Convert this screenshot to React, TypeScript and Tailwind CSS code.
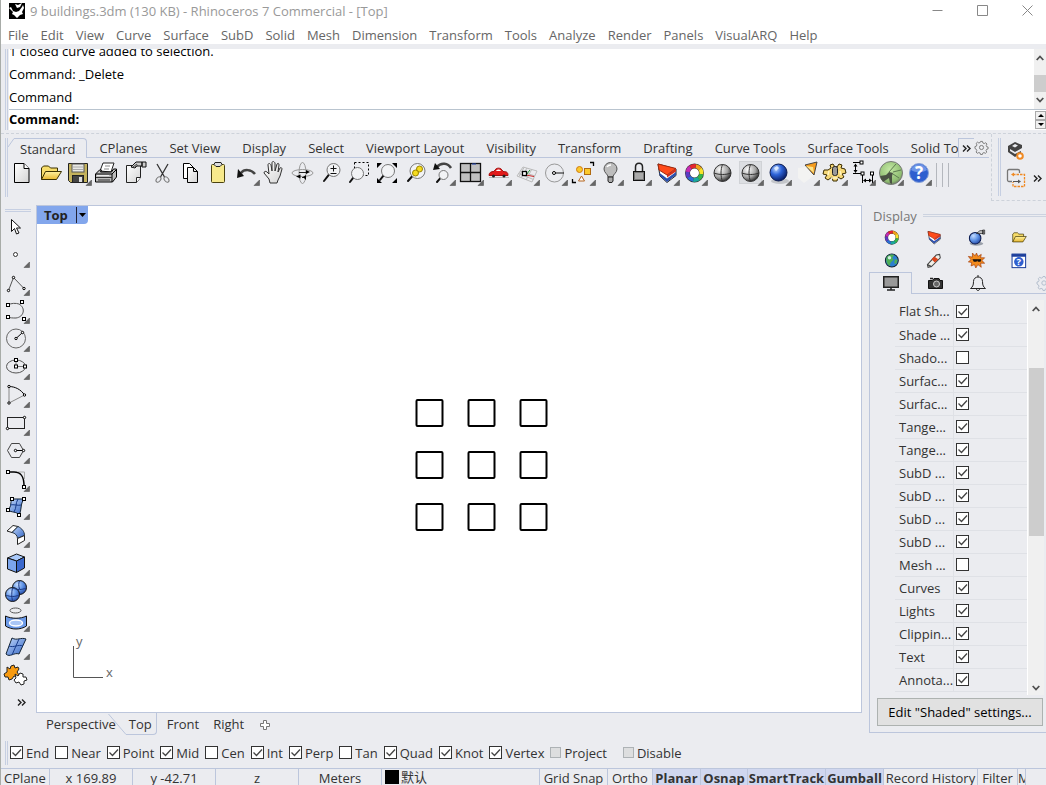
import { useState } from 'react'
import type { ReactNode } from 'react'
import clsx from 'clsx'

const MENUS = [
  'File', 'Edit', 'View', 'Curve', 'Surface', 'SubD', 'Solid', 'Mesh', 'Dimension', 'Transform',
  'Tools', 'Analyze', 'Render', 'Panels', 'VisualARQ', 'Help',
]

const TOOLBAR_TABS = [
  'CPlanes', 'Set View', 'Display', 'Select', 'Viewport Layout', 'Visibility', 'Transform',
  'Drafting', 'Curve Tools', 'Surface Tools', 'Solid Tools',
]

const DISPLAY_ROWS: [string, boolean][] = [
  ['Flat Sh...', true],
  ['Shade ...', true],
  ['Shado...', false],
  ['Surfac...', true],
  ['Surfac...', true],
  ['Tange...', true],
  ['Tange...', true],
  ['SubD ...', true],
  ['SubD ...', true],
  ['SubD ...', true],
  ['SubD ...', true],
  ['Mesh ...', false],
  ['Curves', true],
  ['Lights', true],
  ['Clippin...', true],
  ['Text', true],
  ['Annota...', true],
]

const OSNAPS: [string, boolean][] = [
  ['End', true],
  ['Near', false],
  ['Point', true],
  ['Mid', true],
  ['Cen', false],
  ['Int', true],
  ['Perp', true],
  ['Tan', false],
  ['Quad', true],
  ['Knot', true],
  ['Vertex', true],
]

/* ---------- icon helpers ---------- */

function Nodes({ at, r = 1.5 }: { at: [number, number][]; r?: number }) {
  return (
    <>
      {at.map(([x, y]) => (
        <circle key={`${x}-${y}`} cx={x} cy={y} r={r} fill="#fff" stroke="#000" />
      ))}
    </>
  )
}

function Handles({ at }: { at: [number, number][] }) {
  return (
    <>
      {at.map(([x, y]) => (
        <rect key={`${x}-${y}`} x={x - 1.5} y={y - 1.5} width="3" height="3" fill="#fff" stroke="#000" />
      ))}
    </>
  )
}

function Lens({ x, y, r, hx, hy }: { x: number; y: number; r: number; hx: number; hy: number }) {
  return (
    <>
      <path d={`M${x - r * 0.7} ${y + r * 0.7}L${hx} ${hy}`} stroke="#111" strokeWidth="2" strokeLinecap="round" />
      <circle cx={x} cy={y} r={r} fill="#f2f3f5" stroke="#777" />
    </>
  )
}

function Wheel({ r }: { r: number }) {
  const colors = ['#f2a01c', '#f8e22a', '#35b54a', '#1aa89b', '#2a6fd6', '#5b3bc4', '#c52bb4', '#e3262f']
  const c = 2 * Math.PI * r
  return (
    <>
      <circle cx="14.5" cy="14" r={r} fill="#fff" stroke="#333" strokeWidth="5" />
      {colors.map((color, i) => (
        <circle
          key={color}
          cx="14.5"
          cy="14"
          r={r}
          fill="none"
          stroke={color}
          strokeWidth="4"
          strokeDasharray={`${c / 8} ${c}`}
          transform={`rotate(${i * 45 - 80} 14.5 14)`}
        />
      ))}
    </>
  )
}

function Gradients() {
  return (
    <svg className="absolute size-0" aria-hidden="true">
      <defs>
        <linearGradient id="paper" x1="0" y1="0" x2="1" y2="1">
          <stop offset="0" stopColor="#fff" />
          <stop offset="1" stopColor="#d4d4d4" />
        </linearGradient>
        <linearGradient id="gold" x1="0" y1="0" x2="0" y2="1">
          <stop offset="0" stopColor="#fff2a0" />
          <stop offset="1" stopColor="#e8b830" />
        </linearGradient>
        <linearGradient id="sheet" x1="0" y1="0" x2="1" y2="1">
          <stop offset="0" stopColor="#c3d9fb" />
          <stop offset="1" stopColor="#2f62c4" />
        </linearGradient>
        <radialGradient id="gray" cx=".35" cy=".3" r=".75">
          <stop offset="0" stopColor="#fff" />
          <stop offset=".6" stopColor="#a4a4a4" />
          <stop offset="1" stopColor="#222" />
        </radialGradient>
        <radialGradient id="blue" cx=".35" cy=".3" r=".75">
          <stop offset="0" stopColor="#b8d4ff" />
          <stop offset=".45" stopColor="#2d63d8" />
          <stop offset="1" stopColor="#06185c" />
        </radialGradient>
        <radialGradient id="ball" cx=".35" cy=".3" r=".8">
          <stop offset="0" stopColor="#c4dcff" />
          <stop offset=".5" stopColor="#5f93e6" />
          <stop offset="1" stopColor="#1c3f9c" />
        </radialGradient>
        <radialGradient id="green" cx=".45" cy=".35" r=".75">
          <stop offset="0" stopColor="#c4e8a4" />
          <stop offset=".7" stopColor="#8fbd72" />
          <stop offset="1" stopColor="#555" />
        </radialGradient>
      </defs>
    </svg>
  )
}

const layerWedge = (
  <>
    <path d="M6 5l2 12 7 6.500 9-7V10z" fill="#fff" stroke="#222" />
    <path d="M8 17l7 6 9-7v-3l-9 6.500-8-6z" fill="#2a4fae" />
    <path d="M6 5l18 4.500-9 6.500-8-5z" fill="#ff4a1a" stroke="#a02a10" />
    <path d="M15 16v2.500l9-6V9.500z" fill="#d32f1c" />
  </>
)

const folder = (
  <>
    <path d="M5.500 20.500V9l2-2h5l2 2h7v4" fill="#f7dd6a" stroke="#3a3000" />
    <path d="M5.500 20.500l4-8h16l-5 8z" fill="url(#gold)" stroke="#3a3000" />
  </>
)

/* ---------- toolbars ---------- */

type Tool = { name: string; more?: boolean; art: ReactNode }

const MAIN_TOOLS: Tool[] = [
  {
    name: 'New',
    art: (
      <>
        <path d="M6.500 4.500h9.500l5 5v14h-14.500z" fill="url(#paper)" stroke="#000" />
        <path d="M16 4.500v5h5" fill="#fff" stroke="#000" />
      </>
    ),
  },
  { name: 'Open', art: folder },
  {
    name: 'Save',
    more: true,
    art: (
      <>
        <path d="M4.500 4.500h19v19h-17l-2-2z" fill="#c4b25c" stroke="#222" />
        <rect x="8" y="5" width="12" height="8" fill="#e9e9e4" stroke="#555" />
        <path d="M9 8h10M9 10.500h10" stroke="#aaa" />
        <rect x="8.500" y="16.500" width="11" height="7" fill="#444" stroke="#222" />
        <rect x="15" y="18" width="3" height="5" fill="#ddd" />
      </>
    ),
  },
  {
    name: 'Print',
    art: (
      <>
        <path d="M8 12l3-8h11l-3 9z" fill="#fff" stroke="#222" />
        <path d="M13 7h5M12 10h5" stroke="#888" />
        <path d="M3.500 15l4-4h2l-1 2h11l2-3h3v8l-4 5h-17z" fill="#bbb" stroke="#000" />
        <path d="M4 15h16l4-4M20 15v8" stroke="#000" />
        <path d="M4 18.500h16M6 21h12" stroke="#333" />
        <path d="M5 16.500h12" stroke="#eee" />
      </>
    ),
  },
  {
    name: 'Properties',
    art: (
      <>
        <path d="M6.500 6.500h14v12l-4 5h-10z" fill="url(#paper)" stroke="#222" />
        <path d="M20.500 18.500h-4v5" fill="#fff" stroke="#222" />
        <path d="M11 8l5-5h6v4h-5l-2 2zM22 3h4v5h-4z" fill="#ccc" stroke="#111" />
        <path d="M13 8l4-3M15 8l3-2" stroke="#444" />
      </>
    ),
  },
  {
    name: 'Cut',
    art: (
      <>
        <path d="M9 5l7.500 13M20 5l-7.500 13" stroke="#333" strokeWidth="1.300" />
        <ellipse cx="10.500" cy="20.500" rx="2" ry="3" transform="rotate(40 10.500 20.500)" stroke="#777" />
        <ellipse cx="18.500" cy="20.500" rx="2" ry="3" transform="rotate(-40 18.500 20.500)" stroke="#777" />
      </>
    ),
  },
  {
    name: 'Copy',
    art: (
      <>
        <path d="M7.500 4.500h6l4 4v11h-10z" fill="#fff" stroke="#000" />
        <path d="M11.500 8.500h6l4 4v11h-10z" fill="url(#paper)" stroke="#000" />
        <path d="M17.500 8.500v4h4" stroke="#000" />
      </>
    ),
  },
  {
    name: 'Paste',
    art: (
      <>
        <rect x="7.500" y="5.500" width="13" height="18" rx="1" fill="#f7e98c" stroke="#4a4210" />
        <path d="M10 5.500l1-2h6l1 2-2 2h-4z" fill="#ddd" stroke="#222" />
      </>
    ),
  },
  {
    name: 'Undo',
    more: true,
    art: (
      <>
        <path d="M9 14c3-4 10-4 14 1" stroke="#444" strokeWidth="2.500" />
        <path d="M5 19l1-9 6 7z" fill="#111" />
      </>
    ),
  },
  {
    name: 'Pan',
    art: (
      <path
        d="M10 24l-1-4-5-6c0-2 2-2 3-1l2 2-1-9c0-2 2-2 3 0l1 6V4c0-2 2-2 3 0v8l2-7c1-1 2-1 2 1l-1 7 2-4c1-1 2 0 2 1l-2 7-2 4-1 3z"
        fill="url(#paper)"
        stroke="#333"
        strokeLinejoin="round"
      />
    ),
  },
  {
    name: 'Rotate view',
    art: (
      <>
        <ellipse cx="14.500" cy="14" rx="10.500" ry="3.500" stroke="#999" />
        <ellipse cx="14.500" cy="14" rx="3.500" ry="10.500" stroke="#999" />
        <path d="M11 13.500h8M14 18.500h3.500" stroke="#222" />
        <path d="M8 17.500l4.500-2v4zM22 13l-4-2v4zM18 16l-3 2 3 3z" fill="#000" />
      </>
    ),
  },
  {
    name: 'Zoom dynamic',
    art: (
      <>
        <Lens x={17.5} y={11} r={6.5} hx={8} hy={22} />
        <path d="M14.500 9.500h6M17.500 6.500v6M14.500 14.500h6" stroke="#111" />
      </>
    ),
  },
  {
    name: 'Zoom window',
    art: (
      <>
        <rect x="10.500" y="3.500" width="14" height="13" stroke="#000" strokeDasharray="2 2" />
        <Lens x={13.5} y={14.5} r={6} hx={6} hy={23} />
      </>
    ),
  },
  {
    name: 'Zoom extents',
    art: (
      <>
        <path d="M5 4h5l-5 5zM25 4h-5l5 5zM5 24h5l-5-5zM25 24h-5l5-5z" fill="#000" />
        <Lens x={16} y={12} r={6.5} hx={8} hy={21} />
      </>
    ),
  },
  {
    name: 'Zoom selected',
    art: (
      <>
        <Lens x={17.5} y={12} r={7.5} hx={8} hy={22} />
        <circle cx="19.500" cy="10" r="3" fill="#f5dc1e" stroke="#9a8400" />
        <circle cx="15.500" cy="14" r="3" fill="#f5dc1e" stroke="#9a8400" />
      </>
    ),
  },
  {
    name: 'Undo view change',
    more: true,
    art: (
      <>
        <path d="M9 8c4-5 11-4 14 1" stroke="#444" strokeWidth="2.500" />
        <path d="M5 11l2-7 5 6z" fill="#111" />
        <Lens x={15.5} y={16} r={4.5} hx={9} hy={23} />
      </>
    ),
  },
  {
    name: 'Four viewports',
    more: true,
    art: (
      <>
        <rect x="4.500" y="4.500" width="20" height="18" fill="#c0c0c0" stroke="#111" strokeWidth="1.300" />
        <path d="M14.500 4.500v18M4.500 13.500h20" stroke="#111" strokeWidth="1.300" />
        <path d="M16 5h4" stroke="#2548b8" />
      </>
    ),
  },
  {
    name: 'Named views',
    more: true,
    art: (
      <>
        <path d="M5 18.500h20" stroke="#bbb" />
        <path d="M5 16.500c0-3 2-4 5-4 2-4.500 7-4.500 9 0 4 0 5 1 5 4H5z" fill="#e31b1b" stroke="#a30d0d" />
        <path d="M12 12c1-2 4-2 5 0z" fill="#fff" />
        <circle cx="9.500" cy="17" r="1.500" fill="#222" />
        <circle cx="20" cy="17" r="1.500" fill="#222" />
      </>
    ),
  },
  {
    name: 'CPlane',
    more: true,
    art: (
      <>
        <path d="M11 8l14 4-5 11-15-6zM8 12l15 5M6.500 14.500l15 6M15 9l-6 10M20 10l-6 11M12 8.500l-5 9" stroke="#bbb" />
        <path d="M14 16l4-5" stroke="#1a8f2a" />
        <path d="M14 16l8 1.500" stroke="#c22" />
        <rect x="10.500" y="12.500" width="4" height="4" fill="#fff" stroke="#000" strokeWidth="1.300" />
      </>
    ),
  },
  {
    name: 'Object snap',
    more: true,
    art: (
      <>
        <circle cx="14.500" cy="14" r="9" stroke="#999" />
        <path d="M14 14h10" stroke="#111" />
        <Nodes at={[[14, 14]]} />
      </>
    ),
  },
  {
    name: 'Select objects',
    more: true,
    art: (
      <>
        <path d="M22 3.500h3.500V7M4.500 20v3.500H8" stroke="#000" strokeWidth="1.300" />
        <circle cx="11.500" cy="10.500" r="3" fill="#fbc92c" stroke="#d07b10" />
        <rect x="16.500" y="9.500" width="6" height="6" fill="#fbc92c" stroke="#b06a10" />
        <path d="M13.500 17l3 5h-6z" fill="#fff" stroke="#b5651d" />
      </>
    ),
  },
  {
    name: 'Hide',
    more: true,
    art: (
      <>
        <path d="M12 18c0-3-4-4-4-8a6.500 6.500 0 0 1 13 0c0 4-4 5-4 8z" fill="#bdbdbd" stroke="#555" />
        <path d="M11 8c1-2 3-2 4-2" stroke="#fff" strokeWidth="1.500" />
        <path d="M12 18h5v4l-1 1.500h-3l-1-1.500z" fill="#aaa" stroke="#222" />
      </>
    ),
  },
  {
    name: 'Lock',
    more: true,
    art: (
      <>
        <path d="M11.500 13V8c0-5 7-5 7 0v5" stroke="#222" strokeWidth="1.500" />
        <rect x="9.500" y="12.500" width="11" height="9" fill="#777" stroke="#111" />
        <path d="M11 15h8M11 17h8M11 19h8" stroke="#ddd" />
      </>
    ),
  },
  { name: 'Layers', more: true, art: layerWedge },
  { name: 'Object properties', more: true, art: <Wheel r={7} /> },
  {
    name: 'Shade',
    art: (
      <>
        <circle cx="14.500" cy="14" r="8.500" fill="url(#gray)" stroke="#333" />
        <path d="M6 14c5 2 12 2 17 0M14.500 5.500c-2 5-2 12 0 17" stroke="#333" />
      </>
    ),
  },
  {
    name: 'Shaded viewport',
    more: true,
    art: (
      <>
        <rect x="3" y="2" width="23" height="23" fill="#dcdee2" />
        <rect x="3.500" y="2.500" width="22" height="22" stroke="#c4c6ca" strokeDasharray="1 1" />
        <circle cx="14.500" cy="14" r="8.500" fill="url(#gray)" stroke="#333" />
        <path d="M6 14c5 2 12 2 17 0M14.500 5.500c-2 5-2 12 0 17" stroke="#333" />
      </>
    ),
  },
  {
    name: 'Render',
    more: true,
    art: (
      <>
        <ellipse cx="16" cy="22" rx="9" ry="3" fill="#c4c6ca" />
        <circle cx="14.500" cy="13.500" r="8.500" fill="url(#blue)" stroke="#0a1a50" />
        <path d="M10 9l3-2 2 2-3 3z" fill="#dceaff" />
      </>
    ),
  },
  {
    name: 'Spotlight',
    more: true,
    art: (
      <>
        <path d="M6 9l13-2 5 8-12 9-6-5z" fill="#f3f3f2" />
        <path d="M13 6l12-3-3 13z" fill="#f59b1d" stroke="#444" />
        <path d="M14 7l7 1 1 6z" fill="#fde58a" />
      </>
    ),
  },
  {
    name: 'Options',
    more: true,
    art: (
      <>
        <path
          d="M11 9l-1-3 3-1 2 3h2l2-3 3 1-1 3 4 1 1 4-4 1 2 3-3 2-3-2-1 4h-4l-1-4-4 3-3-2 2-3-4-1 1-4 4 0z"
          fill="#f6d878"
          stroke="#3a2c00"
          strokeLinejoin="round"
        />
        <path d="M9 12l-1 4M20 12l1 4M11 19h7" stroke="#fff4c0" strokeWidth="1.500" />
        <rect x="12.500" y="7.500" width="5" height="9" rx="2" fill="#999" stroke="#222" />
      </>
    ),
  },
  {
    name: 'Dimension',
    more: true,
    art: (
      <>
        <path d="M5 3.500h8M7.500 5v8M5 14.500h8M14.500 16v8M24.500 16v8M16 21.500h7" stroke="#000" />
        <path d="M7.500 4.500l-2 3h4zM7.500 14l-2-3h4zM15 21.500l3-2v4zM24 21.500l-3-2v4z" fill="#000" />
        <Handles at={[[13.5, 3.5], [14.5, 14.5], [24, 14.5]]} />
      </>
    ),
  },
  {
    name: 'Grasshopper',
    more: true,
    art: (
      <>
        <circle cx="15" cy="14" r="11.500" fill="url(#green)" stroke="#777" />
        <path d="M4 17l6-1 3-3 4 1-1 3v8l-2-1-1-5-3 2-3 2-2-3z" fill="#4a5244" />
        <path d="M13 13L20 5M17 13l8-2M17 15l6 4" stroke="#5d7a50" />
      </>
    ),
  },
  {
    name: 'Help',
    more: true,
    art: (
      <>
        <circle cx="15" cy="14" r="9.500" fill="#2f5fcf" stroke="#8aa3d8" />
        <path d="M7 11a8.500 8.500 0 0 1 16 0c-5 3-11 3-16 0z" fill="#6c94e6" />
        <text x="15" y="20" textAnchor="middle" fontSize="17" fontWeight="700" fill="#fff">?</text>
      </>
    ),
  },
]

const SIDE_TOOLS: Tool[] = [
  { name: 'Cancel', art: <path d="M9.500 6.500v12l3-3 2 5.500 2.500-1-2.500-5h4z" fill="#fff" stroke="#111" /> },
  { name: 'Point', more: true, art: <circle cx="13.500" cy="13.500" r="2" fill="#fff" stroke="#333" /> },
  {
    name: 'Polyline',
    more: true,
    art: (
      <>
        <path d="M6.500 21.500l5-13 10.500 11" stroke="#555" />
        <Nodes r={1.2} at={[[6.5, 21.5], [11.5, 8.5], [22, 19.5]]} />
      </>
    ),
  },
  {
    name: 'Curve',
    more: true,
    art: (
      <>
        <path d="M6 8c3-2 8-2 11-1 7 4 5 13-3 14-3 0-6 0-8-1" stroke="#555" />
        <Handles at={[[6, 8], [20, 5], [6, 20], [22, 22]]} />
      </>
    ),
  },
  {
    name: 'Circle',
    more: true,
    art: (
      <>
        <circle cx="14" cy="13.500" r="9.500" stroke="#666" />
        <path d="M14 13.500l6.500-6" stroke="#000" />
        <Nodes r={1.2} at={[[14, 13.5], [20.5, 7.5]]} />
      </>
    ),
  },
  {
    name: 'Ellipse',
    more: true,
    art: (
      <>
        <ellipse cx="14" cy="13.500" rx="9.500" ry="6.500" stroke="#555" />
        <path d="M14 7v6.500h9" stroke="#777" />
        <Handles at={[[14, 7], [14, 13.5], [23, 13.5]]} />
      </>
    ),
  },
  {
    name: 'Arc',
    more: true,
    art: (
      <>
        <path d="M7 5.500v16.500l15.500-8" stroke="#888" />
        <path d="M7 5.500c6 0 12 3 15.500 8.500" stroke="#000" />
        <Nodes r={1.2} at={[[7, 5.5], [22.5, 14], [7, 22]]} />
      </>
    ),
  },
  {
    name: 'Rectangle',
    more: true,
    art: (
      <>
        <rect x="5.500" y="8.500" width="17" height="11" stroke="#222" />
        <Nodes r={1.2} at={[[5.5, 19.5], [22.5, 8.5]]} />
      </>
    ),
  },
  {
    name: 'Polygon',
    more: true,
    art: (
      <>
        <path d="M5.500 13.500l4-7h8l4 7-4 7h-8z" stroke="#444" />
        <path d="M13.500 13.500h8" stroke="#000" />
        <Nodes r={1.2} at={[[13.5, 13.5], [21.5, 13.5]]} />
      </>
    ),
  },
  {
    name: 'Fillet curves',
    more: true,
    art: (
      <>
        <path d="M16 7h6.500v7" stroke="#aaa" />
        <path d="M6 7h6c7 0 10 4 10 14" stroke="#000" strokeWidth="1.500" />
        <Handles at={[[6, 7], [22, 22]]} />
      </>
    ),
  },
  {
    name: 'Surface from corners',
    more: true,
    art: (
      <>
        <path d="M10 6h12c-4 5-2 11-5 16-3-4-7-2-11-5 4-4 2-8 4-11z" fill="url(#sheet)" stroke="#123" />
        <path d="M16 6c-3 5-1 8-4 13M8 12c4-1 8 1 11 0" stroke="#163a8a" />
        <Handles at={[[10, 6], [22, 6], [6, 17], [17, 22]]} />
      </>
    ),
  },
  {
    name: 'Surface tools',
    more: true,
    art: (
      <>
        <path d="M5 10l6-5.500 5 1-6 6z" fill="#fff" stroke="#222" />
        <path d="M10 11.500l6-6c4 2 6.500 5 6.500 9l-7 3c0-3-2.500-5.500-5.500-6z" fill="url(#sheet)" stroke="#234" />
        <path d="M15.500 17.500l7-3v5l-7 4z" fill="#fff" stroke="#222" />
      </>
    ),
  },
  {
    name: 'Box',
    more: true,
    art: (
      <>
        <path d="M5.500 9l9-4 8 3-8 4z" fill="#a9c9fa" stroke="#111" />
        <path d="M5.500 9l9 3v11.500l-9-3.500z" fill="#7ba5ec" stroke="#111" />
        <path d="M14.500 12l8-4v11l-8 4.500z" fill="#3a68cd" stroke="#111" />
      </>
    ),
  },
  {
    name: 'Boolean union',
    more: true,
    art: (
      <>
        <circle cx="17.500" cy="10.500" r="7" fill="url(#ball)" stroke="#111" />
        <circle cx="10.500" cy="17.500" r="7" fill="url(#ball)" stroke="#111" />
        <path d="M11 11c4 2 9 2 13 0M17.500 4c-1 2-1 5 0 8M4 18c4 2 9 2 13 0M10.500 11c-1 4-1 9 0 13" stroke="#1d3880" />
      </>
    ),
  },
  {
    name: 'Project to surface',
    more: true,
    art: (
      <>
        <ellipse cx="13.500" cy="5.500" rx="5.500" ry="2.500" stroke="#555" />
        <path d="M3.500 11c6 3 15 3 21 0v10c-6 4-15 4-21 0z" fill="#6c9ae8" stroke="#111" />
        <ellipse cx="14" cy="18" rx="6.500" ry="3" fill="#a9c6f6" stroke="#fff" strokeWidth="1.500" />
      </>
    ),
  },
  {
    name: 'Mesh',
    more: true,
    art: (
      <>
        <path d="M10 5c5 3 9-1 14 1l-7 15c-5-2-9 4-13 0z" fill="url(#sheet)" stroke="#123" />
        <path d="M17 6l-7 16M7 13c5 2 9-2 14 0" stroke="#163a8a" />
      </>
    ),
  },
  {
    name: 'Explode',
    art: (
      <>
        <path
          d="M5 6l3 2 1-3 3-1 1 3 3-1 1 2-2 3 2 3-2 2-3-1-2 3-3 1-1-3-3 0-1-3 3-2z"
          fill="#f79a10"
          stroke="#222"
          strokeLinejoin="round"
        />
        <path
          d="M13 13l3 2 2-3 3 1 0 3 3 0 1 3-3 1 0 3-3 1-2-3-3 1-2-3 2-2z"
          fill="#fff"
          stroke="#222"
          strokeLinejoin="round"
        />
      </>
    ),
  },
]

const PANEL_ICONS: Tool[] = [
  { name: 'Properties', art: <Wheel r={8} /> },
  { name: 'Layers', art: layerWedge },
  {
    name: 'Rendering',
    art: (
      <>
        <ellipse cx="14" cy="23" rx="10" ry="3" fill="#9aa0aa" />
        <circle cx="12" cy="15" r="8.500" fill="url(#ball)" stroke="#0a1a50" strokeWidth="1.500" />
        <path d="M14 8l5-4h5v4h-5zM23 3h3v6h-3z" fill="#ccc" stroke="#111" />
      </>
    ),
  },
  { name: 'Libraries', art: folder },
  {
    name: 'Environments',
    art: (
      <>
        <circle cx="14.500" cy="14" r="9.500" fill="#2b7fd0" stroke="#123" strokeWidth="1.500" />
        <path d="M7 9c2-4 8-5 11-3l-3 4 2 3-4 4-2 5c-4-3-6-8-4-13zM19 12l4 1-2 6-3-1z" fill="#4fae56" />
        <circle cx="11" cy="10" r="2.500" fill="#cfeee0" />
      </>
    ),
  },
  {
    name: 'Materials',
    art: (
      <>
        <path d="M5 20L18 6l5-1 1 5-13 13-5 1z" fill="#f1efe8" stroke="#444" strokeWidth="1.500" />
        <path d="M11 12l4-4 6 4-5 5z" fill="#d9431c" />
        <path d="M5 20l6 3" stroke="#444" strokeWidth="2" />
      </>
    ),
  },
  {
    name: 'Sun',
    art: (
      <>
        <path
          d="M14 3l2 5 5-3-1 5 6 0-4 4 4 4-6 0 1 6-5-4-3 5-2-5-5 2 1-5-5-1 4-3-4-5 6 1 0-6 4 4z"
          fill="#f28a1c"
          stroke="#a33a08"
        />
        <path d="M8 12h13l-1 4h-4l-1-2-1 2h-4z" fill="#111" />
      </>
    ),
  },
  {
    name: 'Help',
    art: (
      <>
        <rect x="4.500" y="4.500" width="20" height="20" fill="#fff" stroke="#1d3f9c" strokeWidth="1.500" />
        <path d="M4 6.500h21" stroke="#1d3f9c" strokeWidth="4" />
        <circle cx="14.500" cy="16" r="7" fill="#2f5fcf" />
        <text x="14.500" y="21" textAnchor="middle" fontSize="14" fontWeight="700" fill="#fff">?</text>
      </>
    ),
  },
]

function ToolIcon({ art, more, className = 'size-7' }: { art: ReactNode; more?: boolean; className?: string }) {
  return (
    <svg viewBox="0 0 28 28" fill="none" className={className} aria-hidden="true">
      {art}
      {more && <path d="M27.500 21v5.500h-5.500z" fill="#666" stroke="#444" strokeWidth=".5" />}
    </svg>
  )
}

function ToolButton({ tool }: { tool: Tool }) {
  return (
    <button type="button" aria-label={tool.name} className="size-7 shrink-0">
      <ToolIcon art={tool.art} more={tool.more} />
    </button>
  )
}

function Grip({ className }: { className?: string }) {
  return <div className={clsx('w-[3px] shrink-0 border-x border-[#c6cfe2]', className)} />
}

function Gear({ className }: { className?: string }) {
  return (
    <svg viewBox="0 0 16 16" fill="none" stroke="currentColor" className={className} aria-hidden="true">
      <circle cx="8" cy="8" r="2.200" />
      <path d="M7 1.500h2l.5 1.700 1.400.6 1.600-.9 1.300 1.400-.8 1.600.6 1.300 1.400.3v2l-1.600.5-.6 1.300.8 1.600-1.400 1.300-1.600-.8-1.300.6-.4 1.500H7l-.5-1.600-1.400-.5-1.600.8-1.300-1.400.8-1.600-.6-1.300L1 9V7l1.500-.4.6-1.400-.8-1.600 1.400-1.300 1.500.9 1.400-.6z" />
    </svg>
  )
}

function Chevrons() {
  return (
    <svg viewBox="0 0 9 7" fill="none" stroke="#222" strokeWidth="1.400" className="h-[7px] w-[9px]" aria-hidden="true">
      <path d="M1 .5l3 3-3 3M5 .5l3 3-3 3" />
    </svg>
  )
}

function Arrow({ up }: { up?: boolean }) {
  return (
    <svg viewBox="0 0 8 6" fill="none" stroke="#505050" strokeWidth="1.800" className="h-1.5 w-2" aria-hidden="true">
      <path d={up ? 'M.7 5L4 1.500 7.300 5' : 'M.7 1L4 4.500 7.300 1'} />
    </svg>
  )
}

/* ---------- check box ---------- */

function Check({ id, initial, disabled }: { id: string; initial?: boolean; disabled?: boolean }) {
  const [on, setOn] = useState(!!initial)
  return (
    <span className="relative flex shrink-0">
      <input
        id={id}
        type="checkbox"
        checked={on}
        disabled={disabled}
        onChange={(e) => setOn(e.target.checked)}
        className="size-[13px] appearance-none border border-[#333] bg-white disabled:size-[11px] disabled:border-[#adb2b5] disabled:bg-[#dddedf]"
      />
      {on && (
        <svg viewBox="0 0 13 13" fill="none" className="pointer-events-none absolute inset-0 size-[13px]" aria-hidden="true">
          <path d="M2.500 6.500l3 3 5.500-6" stroke="#444" strokeWidth="1.300" />
        </svg>
      )}
    </span>
  )
}

/* ---------- sections ---------- */

function TitleBar() {
  return (
    <header className="bg-white">
      <div className="flex h-[22px] items-center pl-2 text-[#999]">
        <svg viewBox="0 0 16 16" className="size-4" aria-hidden="true">
          <rect width="16" height="16" fill="#000" />
          <path d="M0 5l2-1 2 4 3 1 3-1 3-4 1-2 1 3-2 4 1 2-3 1-3 3-3-3-2-1 1-2z" fill="#fff" />
          <path d="M6 1l3 1 4-2-2 4-3 1z" fill="#fff" />
        </svg>
        <h1 className="ml-[5px] flex-1 truncate">9 buildings.3dm (130 KB) - Rhinoceros 7 Commercial - [Top]</h1>
        <div className="flex items-center gap-[34px] pr-[13px]">
          {[
            ['Minimize', 'M.5 5.500h10'],
            ['Maximize', 'M.5.5h10v10H.5z'],
            ['Close', 'M.5.5l10 10M10.500.5l-10 10'],
          ].map(([name, d]) => (
            <button key={name} type="button" aria-label={name}>
              <svg viewBox="0 0 11 12" fill="none" stroke="#888" className="h-3 w-[11px]">
                <path d={d} />
              </svg>
            </button>
          ))}
        </div>
      </div>
      <nav className="flex h-[22px] items-center gap-3 pt-1 pl-[7px] text-[#666]">
        {MENUS.map((m) => (
          <button key={m} type="button">
            {m}
          </button>
        ))}
      </nav>
    </header>
  )
}

function CommandArea() {
  return (
    <section className="flex pt-[5px] pl-1 text-black">
      <Grip className="mr-px" />
      <div className="flex-1 bg-white">
        <div className="flex h-[61px] border-b border-[#b9c4cf]">
          <div className="flex flex-1 flex-col justify-end overflow-hidden leading-[23px]">
            <p>1 closed curve added to selection.</p>
            <p>Command: _Delete</p>
            <p>Command</p>
          </div>
          <div className="flex w-3 flex-col items-center justify-between bg-[#f0f0f0] pt-1.5 pb-1.5">
            <Arrow up />
            <div className="mt-2 h-[17px] w-full bg-[#cdcdcd]" />
            <Arrow />
          </div>
        </div>
        <div className="flex h-5">
          <label htmlFor="command" className="leading-[18px] font-bold">
            Command:
          </label>
          <input id="command" className="ml-1 h-5 min-w-0 flex-1 bg-transparent outline-none" />
          <div className="flex w-[11px] flex-col pt-px">
            {['M4 1l3 3H1z', 'M4 4l3-3H1z'].map((d, i) => (
              <button
                key={d}
                type="button"
                aria-label={i ? 'Next command' : 'Previous command'}
                className="flex h-[9px] items-center justify-center border border-[#aaa] bg-[#f0f0f0]"
              >
                <svg viewBox="0 0 8 5" className="h-[5px] w-2">
                  <path d={d} />
                </svg>
              </button>
            ))}
          </div>
        </div>
      </div>
    </section>
  )
}

function Toolbars() {
  return (
    <section className="mt-[3px] flex border-t border-dashed border-[#cdd2da] pl-1">
      <Grip className="my-1" />
      <div className="min-w-0 flex-1 pt-1">
        <div className="flex h-5 pr-0.5">
          <svg viewBox="0 0 7 20" fill="none" className="h-5 w-[7px] shrink-0" aria-hidden="true">
            <path d="M0 9L6 .5h1" stroke="#bcc6dc" />
          </svg>
          <button type="button" className="shrink-0 rounded-tr border-t border-r border-[#bcc6dc] pr-[11px] pl-[5px]">
            Standard
          </button>
          <div className="flex min-w-0 flex-1 gap-[22px] overflow-hidden border-b border-[#bcc6dc] pl-3">
            {TOOLBAR_TABS.map((t) => (
              <button key={t} type="button" className="shrink-0">
                {t}
              </button>
            ))}
          </div>
          <button
            type="button"
            aria-label="More tabs"
            className="flex w-4 shrink-0 items-center justify-center border-t border-b border-l border-[#bcc6dc]"
          >
            <Chevrons />
          </button>
          <button type="button" aria-label="Toolbar options" className="shrink-0 border-b border-[#bcc6dc] text-[#777]">
            <Gear className="size-[15px]" />
          </button>
        </div>
        <div className="flex h-[43px] overflow-hidden pt-px">
          {MAIN_TOOLS.map((t) => (
            <ToolButton key={t.name} tool={t} />
          ))}
          <div className="mt-1 flex h-6 gap-[5px] pl-1">
            <span className="w-px bg-[#b4b7bd]" />
            <span className="w-px bg-[#b4b7bd]" />
            <span className="w-px bg-[#b4b7bd]" />
          </div>
        </div>
      </div>
      <div className="flex w-[55px] shrink-0 border-b border-l border-dashed border-[#cdd2da] pl-1.5">
        <Grip className="my-1" />
        <div className="flex flex-1 flex-col pt-[7px] pl-[5px]">
          <button type="button" aria-label="VisualARQ" className="size-5">
            <svg viewBox="0 0 20 20" fill="none" className="size-5" aria-hidden="true">
              <path d="M2 5l7-4 7 3v3l-7 4-5-3v2l5 3 6-3v2l-6 4-7-5z" fill="#444" />
              <path d="M6 5l3-2 3 1.500-3 2z" fill="#ebecf0" />
              <circle cx="14" cy="15" r="2.800" fill="#fff" stroke="#f08a24" strokeWidth="2" />
            </svg>
          </button>
          <div className="mt-[7px] flex items-center gap-[7px]">
            <button type="button" aria-label="Convert" className="size-5">
              <svg viewBox="0 0 20 20" fill="none" className="size-5" aria-hidden="true">
                <path d="M6 13.500H3a1.500 1.500 0 0 1-1.500-1.500V3A1.500 1.500 0 0 1 3 1.500h9A1.500 1.500 0 0 1 13.500 3v2" stroke="#777" strokeWidth="1.300" />
                <path d="M7 6.500h11.500v12H7V14" stroke="#f08a24" strokeWidth="1.300" strokeDasharray="2.500 1" />
                <path d="M7 13.500h6" stroke="#555" />
                <path d="M12 11.500l3 2-3 2z" fill="#555" />
                <path d="M8 4.500l-3 2 3 2z" fill="#f08a24" />
              </svg>
            </button>
            <button type="button" aria-label="More tools">
              <Chevrons />
            </button>
          </div>
        </div>
      </div>
    </section>
  )
}

function Viewport() {
  return (
    <div className="relative min-h-0 flex-1 border border-[#bcc6dc] bg-white">
      <button type="button" className="flex h-[18px] items-center rounded-br bg-[#82a6ec] pl-[7px] font-bold text-[#222]">
        Top
        <span className="ml-2 flex h-4 items-center border-l border-[#223] px-0.5">
          <svg viewBox="0 0 7 4" className="h-1 w-[7px]" aria-hidden="true">
            <path d="M0 0h7L3.500 4z" />
          </svg>
        </span>
      </button>
      {/* closed curves in the Top view */}
      <svg viewBox="0 0 134 134" fill="none" className="absolute top-[192px] left-[377px] size-[134px]">
        {[0, 52, 104].map((y) =>
          [0, 52, 104].map((x) => (
            <rect key={`${x}-${y}`} x={x + 2.5} y={y + 2} width="26" height="26" rx="1" stroke="#000" strokeWidth="2" />
          )),
        )}
      </svg>
      <svg viewBox="0 0 44 48" fill="none" className="absolute bottom-8 left-[34px] h-12 w-11 overflow-visible text-[#666]">
        <path d="M2.500 14v31.500H32" stroke="#555" />
        <text x="5" y="14" fontSize="13" fill="currentColor">y</text>
        <text x="35" y="45" fontSize="13" fill="currentColor">x</text>
      </svg>
    </div>
  )
}

function ViewTabs() {
  return (
    <div className="flex h-6 pl-[10px]">
      <button type="button" className="pb-0.5">Perspective</button>
      <svg viewBox="0 0 18 22" fill="none" className="-ml-2 h-[22px] w-[18px]" aria-hidden="true">
        <path d="M.5 1L18 21.500" stroke="#bcc6dc" />
      </svg>
      <button type="button" className="mr-[10px] h-[22px] rounded-br border-r border-b border-[#bcc6dc] pr-1 pl-[3px]">
        Top
      </button>
      <button type="button" className="pb-0.5">Front</button>
      <button type="button" className="ml-[14px] pb-0.5">
        Right
      </button>
      <button type="button" aria-label="New viewport" className="ml-4">
        <svg viewBox="0 0 10 10" fill="#fff" stroke="#777" className="size-[10px]">
          <path d="M3.500.5h3v3h3v3h-3v3h-3v-3h-3v-3h3z" />
        </svg>
      </button>
    </div>
  )
}

function DisplayPanel() {
  return (
    <aside className="flex w-[177px] shrink-0 flex-col overflow-hidden">
      <div className="flex h-[21px] shrink-0 items-center gap-1.5 pl-1 text-[#777]">
        <h2>Display</h2>
        <span className="h-[3px] flex-1 border-y border-[#ccd3e0]" />
      </div>
      <div className="grid shrink-0 grid-cols-4 pr-1.5 pl-px">
        {PANEL_ICONS.map((p) => (
          <button key={p.name} type="button" aria-label={p.name} className="flex h-[23px] items-center justify-center">
            <ToolIcon art={p.art} className="size-[19px]" />
          </button>
        ))}
      </div>
      <div className="flex h-[22px] shrink-0">
        <button
          type="button"
          aria-label="Display"
          className="flex w-[43px] items-center justify-center border-t border-r border-l border-[#bcc6dc]"
        >
          <svg viewBox="0 0 16 15" fill="none" className="h-[15px] w-4">
            <rect x=".75" y=".75" width="14.500" height="10.500" fill="#999" stroke="#222" strokeWidth="1.500" />
            <path d="M8 11v3M4 14h8" stroke="#222" strokeWidth="1.500" />
          </svg>
        </button>
        <div className="flex flex-1 items-center border-b border-[#bcc6dc] pl-4">
          <button type="button" aria-label="Named views">
            <svg viewBox="0 0 15 12" fill="none" className="h-3 w-[15px]">
              <path d="M.5 3.500h4l1.500-2h5l1 2h2.500v8H.5z" fill="#333" stroke="#111" />
              <circle cx="8.500" cy="7" r="3" fill="#666" stroke="#ccc" />
              <path d="M2 1.500h3" stroke="#222" strokeWidth="1.500" />
            </svg>
          </button>
          <button type="button" aria-label="Notifications" className="ml-[27px]">
            <svg viewBox="0 0 16 16" fill="none" stroke="#222" className="size-4">
              <path d="M.5 13.500h15c-2-1.500-3-3-3-7 0-6-9-6-9 0 0 4-1 5.500-3 7zM6.500 14c0 2 3 2 3 0M8 0v2" />
            </svg>
          </button>
          <button type="button" aria-label="Panel options" className="-mr-1.5 ml-auto text-[#b4bfce]">
            <Gear className="size-4" />
          </button>
        </div>
      </div>
      <div className="flex min-h-0 flex-1 flex-col border-b border-l border-[#bcc6dc] pt-1.5 pb-1.5">
        <div className="flex min-h-0 flex-1 overflow-hidden pl-[25px]">
          <table className="h-fit flex-1 table-fixed border-collapse">
            <tbody>
              {DISPLAY_ROWS.map(([name, on], i) => (
                <tr key={i} className="h-[23px] border-b border-[#dfe1e6]">
                  <td className="w-[54px] border-r border-[#dfe1e6] pl-1 leading-[22px] whitespace-nowrap">
                    <label htmlFor={`display-${i}`}>{name}</label>
                  </td>
                  <td className="pl-0.5">
                    <Check id={`display-${i}`} initial={on} />
                  </td>
                </tr>
              ))}
            </tbody>
          </table>
          <div className="mr-[2px] flex w-[17px] flex-col items-center border-l border-white bg-[#f0f0f0] pt-1.5 pb-1">
            <Arrow up />
            <div className="mt-14 h-[168px] w-[15px] bg-[#cdcdcd]" />
            <span className="flex-1" />
            <Arrow />
          </div>
        </div>
        <button
          type="button"
          className="mt-[3px] mr-[3px] ml-[7px] h-7 shrink-0 border border-[#adb2b0] bg-[#e1e1e1] text-black"
        >
          Edit "Shaded" settings...
        </button>
      </div>
    </aside>
  )
}

function OsnapBar() {
  return (
    <section className="flex h-[31px] items-center pl-1">
      <Grip className="mr-0.5 h-6" />
      <div className="flex gap-1.5">
        {OSNAPS.map(([name, on]) => (
          <span key={name} className="flex items-center gap-[3px]">
            <Check id={`snap-${name}`} initial={on} />
            <label htmlFor={`snap-${name}`}>{name}</label>
          </span>
        ))}
      </div>
      {['Project', 'Disable'].map((name, i) => (
        <span key={name} className={clsx('flex items-center gap-[3px]', i ? 'ml-4' : 'ml-1.5')}>
          <Check id={`snap-${name}`} disabled />
          <label htmlFor={`snap-${name}`}>{name}</label>
        </span>
      ))}
    </section>
  )
}

const CELL = 'shrink-0 border-r border-[#bcc6dc] text-center'

function StatusBar() {
  return (
    <footer className="flex h-[17px] overflow-hidden border-t border-[#bcc6dc] leading-[19px] whitespace-nowrap">
      <button type="button" className={clsx(CELL, 'w-[49px]')}>CPlane</button>
      <span className={clsx(CELL, 'w-[83px]')}>x 169.89</span>
      <span className={clsx(CELL, 'w-[83px]')}>y -42.71</span>
      <span className={clsx(CELL, 'w-[83px]')}>z</span>
      <button type="button" className={clsx(CELL, 'w-[83px]')}>Meters</button>
      <button type="button" className="flex min-w-0 flex-1 items-center gap-0.5 border-r border-[#bcc6dc] pl-[3px]">
        <span className="size-[14px] bg-black" />
        默认
      </button>
      <button type="button" className={clsx(CELL, 'w-[68px]')}>Grid Snap</button>
      <button type="button" className={clsx(CELL, 'w-[45px]')}>Ortho</button>
      <button type="button" className={clsx(CELL, 'w-12 bg-[#d0d7ef] font-bold')}>Planar</button>
      <button type="button" className={clsx(CELL, 'w-[47px] bg-[#d0d7ef] font-bold')}>Osnap</button>
      <button type="button" className={clsx(CELL, 'w-[78px] bg-[#d0d7ef] font-bold')}>SmartTrack</button>
      <button type="button" className={clsx(CELL, 'w-[58px] bg-[#d0d7ef] font-bold')}>Gumball</button>
      <button type="button" className={clsx(CELL, 'w-[94px]')}>Record History</button>
      <button type="button" className={clsx(CELL, 'w-10')}>Filter</button>
      <span className={clsx(CELL, 'mr-5 w-2 overflow-hidden text-left')}>M</span>
    </footer>
  )
}

export default function App() {
  return (
    <div className="flex h-screen flex-col overflow-hidden border-l border-[#a8aca8] bg-[#ebecf0] font-['Open_Sans','Noto_Sans_CJK_SC',sans-serif] text-[13px] leading-5 text-[#333]">
      <Gradients />
      <TitleBar />
      <CommandArea />
      <Toolbars />
      <main className="flex min-h-0 flex-1">
        <div className="flex w-[35px] shrink-0 flex-col items-start overflow-hidden pt-3 pl-px">
          <div className="absolute h-[3px] w-[26px] -translate-y-1 translate-x-[3px] border-y border-[#c6cfe2]" />
          {SIDE_TOOLS.map((t) => (
            <ToolButton key={t.name} tool={t} />
          ))}
          <button type="button" aria-label="More tools" className="mt-2.5 ml-[15px]">
            <Chevrons />
          </button>
        </div>
        <div className="flex min-w-0 flex-1 flex-col pt-1">
          <Viewport />
          <ViewTabs />
        </div>
        <div className="flex pt-1 pb-1 pl-[7px]">
          <DisplayPanel />
        </div>
      </main>
      <OsnapBar />
      <StatusBar />
    </div>
  )
}
